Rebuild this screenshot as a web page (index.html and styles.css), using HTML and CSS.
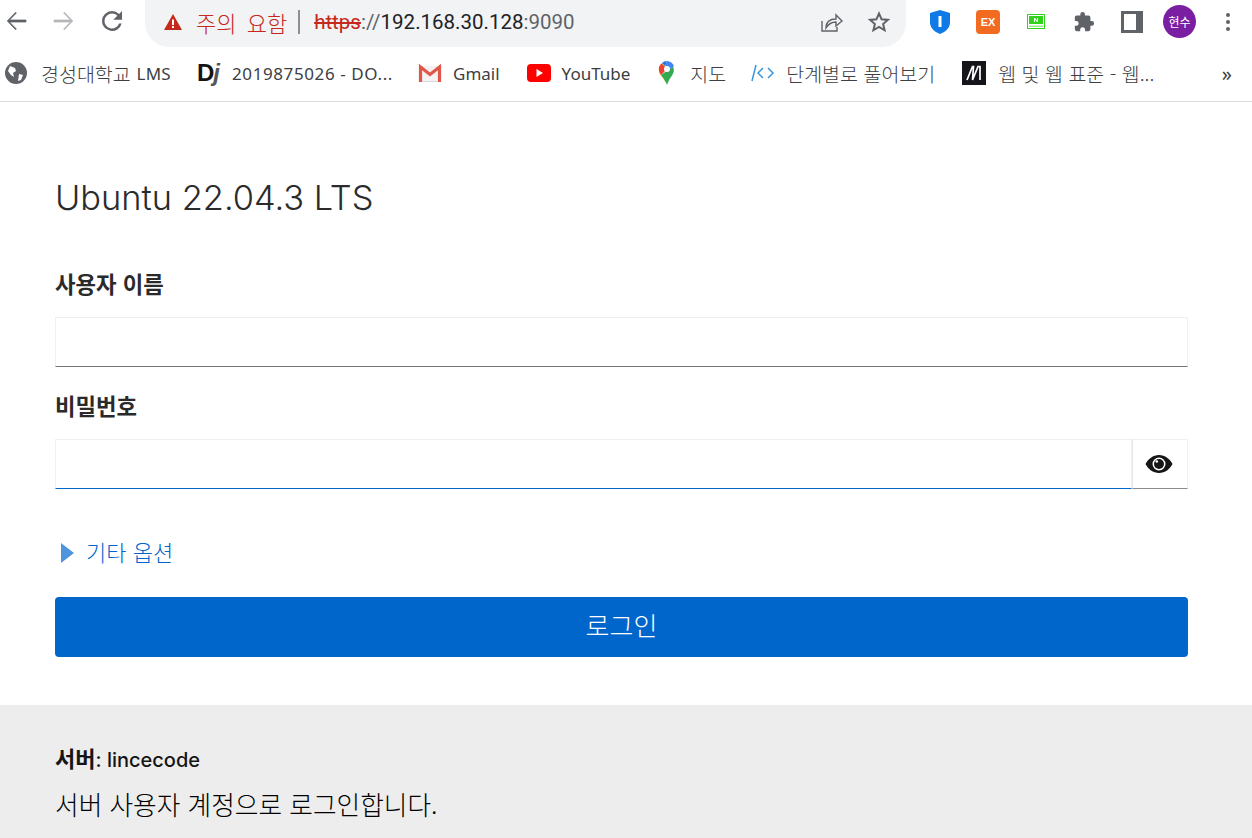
FILE: index.html
```html
<!DOCTYPE html>
<html lang="ko">
<head>
  <meta charset="utf-8">
  <title>Ubuntu 22.04.3 LTS</title>
  <link rel="stylesheet" href="styles.css">
</head>
<body>
<header class="chrome">
  <div class="toolbar">
    <svg class="nav nav-back" width="24" height="24" viewBox="2.4 2.4 19.2 19.2"><path d="M20 11.200H6.800l5.500-5.600L11.700 5 5 12l6.700 7 .6-.6-5.500-5.600H20z" fill="#5f6368" stroke="#5f6368" stroke-width=".6"/></svg>
    <svg class="nav nav-forward" width="24" height="24" viewBox="2.4 2.4 19.2 19.2"><path d="M4 11.200h13.200l-5.500-5.600.6-.6L19 12l-6.700 7-.6-.6 5.500-5.600H4z" fill="#b4b6b9" stroke="#b4b6b9" stroke-width=".6"/></svg>
    <svg class="nav nav-reload" width="24" height="24" viewBox="2.4 2.4 19.2 19.2"><path d="M17.650 6.350A7.960 7.960 0 0 0 12 4a8 8 0 1 0 7.730 10h-2.080A6 6 0 1 1 12 6c1.660 0 3.140.690 4.220 1.780L13 11h7V4z" fill="#5f6368"/></svg>
    <div class="omnibox">
      <svg class="warn" width="20" height="18" viewBox="0 0 20 18"><path d="M10 1l9 16H1z" fill="#c5281c"/><rect x="9" y="6.500" width="2" height="5.500" fill="#fff"/><rect x="9" y="13" width="2" height="2" fill="#fff"/></svg>
      <span class="warn-text">주의 요함</span>
      <span class="divider"></span>
      <span class="url"><s class="scheme">https</s><span class="dim">://</span>192.168.30.128<span class="dim">:9090</span></span>
      <span class="spacer"></span>
      <svg class="omni-icon" width="24" height="24" viewBox="0 0 24 24" fill="none" stroke="#5f6368" stroke-width="1.400"><path d="M3 11v10h15v-4"/><path d="M7 18c0-6 4-9 10-9V5l6 6-6 5v-4c-4 0-7 1-10 6z"/></svg>
      <svg class="omni-icon star" width="24" height="24" viewBox="0 0 24 24" fill="none" stroke="#5f6368" stroke-width="2"><path d="M12 3.500l2.600 5.800 6.300.6-4.800 4.200 1.500 6.200L12 17l-5.600 3.300 1.500-6.200L3.100 9.900l6.300-.6z"/></svg>
    </div>
    <div class="extensions">
      <svg width="20" height="24" viewBox="0 0 20 24"><path d="M10 0l10 3v9c0 6-4 9.500-10 12C4 21.500 0 18 0 12V3z" fill="#0f7ae5"/><rect x="8.500" y="6" width="3" height="11" fill="#fff"/></svg>
      <span class="ext-ex">EX</span>
      <svg width="18" height="15" viewBox="0 0 18 15"><rect x=".5" y=".5" width="17" height="14" fill="#fff" stroke="#2fd31b"/><rect x="2" y="2" width="14" height="8" fill="#2fd31b"/><rect x="2" y="11.500" width="14" height="1.500" fill="#9bea90"/><path d="M7 8V4h1l2 2.500V4h1v4h-1L8 5.500V8z" fill="#fff"/></svg>
      <svg width="22" height="22" viewBox="0 0 24 24"><path d="M20.500 11H19V7a2 2 0 0 0-2-2h-4V3.500a2.500 2.500 0 0 0-5 0V5H4a2 2 0 0 0-2 2v3.800h1.500a2.700 2.700 0 0 1 0 5.400H2V20a2 2 0 0 0 2 2h3.800v-1.500a2.700 2.700 0 0 1 5.400 0V22H17a2 2 0 0 0 2-2v-4h1.500a2.500 2.500 0 0 0 0-5z" fill="#5f6368"/></svg>
      <svg width="22" height="22" viewBox="0 0 22 22"><path d="M0 0h22v22H0z" fill="#5f6368"/><rect x="3" y="3" width="12" height="16" fill="#fff"/></svg>
      <span class="avatar">현수</span>
      <svg width="6" height="20" viewBox="0 0 6 20"><circle cx="3" cy="3" r="2" fill="#5f6368"/><circle cx="3" cy="10" r="2" fill="#5f6368"/><circle cx="3" cy="17" r="2" fill="#5f6368"/></svg>
    </div>
  </div>
  <nav class="bookmarks">
    <a class="bm bm-lms">
      <svg width="22" height="22" viewBox="0 0 22 22"><circle cx="11" cy="11" r="11" fill="#5f6368"/><path d="M5 4l5 2 1 3-3 2 1 4-3-2-3-4zM14 12l4 1-2 5-3 1z" fill="#fff"/></svg>
      <span class="ko">경성대학교</span>&nbsp;LMS</a>
    <a class="bm bm-dj"><span class="dj-logo">D<span class="dj-j">j</span></span><span class="dj-text">2019875026 - DO...</span></a>
    <a class="bm bm-gmail">
      <svg width="24" height="18" viewBox="0 0 24 18"><path d="M2 2h20v16H2z" fill="#f3f1f1"/><path d="M5 18h14" stroke="#d9d9d9" stroke-width="2"/><path d="M2.500 18V3l9.500 7.500L21.500 3v15" fill="none" stroke="#e0574a" stroke-width="3.200"/></svg>
      Gmail</a>
    <a class="bm bm-yt">
      <svg width="24" height="18" viewBox="0 0 24 18"><rect width="24" height="18" rx="4" fill="#f00"/><path d="M9.500 5l6.500 4-6.500 4z" fill="#fff"/></svg>
      YouTube</a>
    <a class="bm bm-maps">
      <svg width="18" height="24" viewBox="0 0 18 24"><path d="M9 24C7 19 1 15 1 8a8 8 0 0 1 3-6l5 5-6 7c2 3 4 6 6 10z" fill="#fbbc04"/><path d="M9 24c-1-3-3-6-6-10l12-8.500c1.500 3.500 1 6-1 9-2 3-4 6-5 9.500z" fill="#34a853"/><path d="M4 2a8 8 0 0 1 5-2l-2 5z" fill="#1a73e8"/><path d="M9 0a8 8 0 0 1 7 5l-4 3-5-3z" fill="#4285f4"/><path d="M3.500 2.500L9 8l-6 6c-3-4-3-8 .5-11.500z" fill="#ea4335"/><circle cx="9" cy="8" r="3" fill="#fff"/></svg>
      <span class="ko">지도</span></a>
    <a class="bm bm-step">
      <svg width="24" height="18" viewBox="0 0 24 18" fill="none" stroke="#3b95d9" stroke-width="1.500"><path d="M5 1L1 17M12 4L7 9l5 5M17 4l5 5-5 5"/></svg>
      <span class="ko">단계별로 풀어보기</span></a>
    <a class="bm bm-mdn">
      <svg width="24" height="24" viewBox="0 0 24 24"><rect width="24" height="24" fill="#15141a"/><path d="M5 19L10.500 5.500h1L10.500 19 16 5.500h2V19" fill="none" stroke="#fff" stroke-width="1.700"/></svg>
      <span class="ko">웹 및 웹 표준 - 웹...</span></a>
    <span class="more">»</span>
  </nav>
</header>

<main class="login">
  <h1 class="brand">Ubuntu 22.04.3 LTS</h1>
  <form class="login-form">
    <label class="field-label" for="user">사용자 이름</label>
    <input class="text-input input-user" id="user" type="text">
    <label class="field-label" for="pass">비밀번호</label>
    <div class="input-group">
      <input class="text-input input-pass" id="pass" type="password">
      <button class="eye-btn" type="button">
        <svg width="28" height="18" viewBox="0 0 28 18"><path d="M14 0c6 0 11 4 13.500 9C25 14 20 18 14 18S3 14 .5 9C3 4 8 0 14 0z" fill="#151515"/><circle cx="14" cy="9" r="6.500" fill="#fff"/><circle cx="14" cy="9" r="5" fill="#151515"/><circle cx="11.800" cy="6.500" r="1.300" fill="#fff"/></svg>
      </button>
    </div>
    <div class="other-options">
      <span class="caret"></span>
      <a class="other-link">기타 옵션</a>
    </div>
    <button class="login-btn" type="button">로그인</button>
  </form>
</main>

<footer class="server-info">
  <p class="server-name"><strong>서버</strong>: lincecode</p>
  <p class="server-note">서버 사용자 계정으로 로그인합니다.</p>
</footer>
</body>
</html>
```

FILE: styles.css
```css
html, body { margin: 0; padding: 0; }
body { width: 1252px; height: 838px; overflow: hidden; background: #fff; color: #151515; font-family: "Inter", "Noto Sans CJK KR", sans-serif; }

/* browser chrome */
.chrome { height: 102px; box-sizing: border-box; border-bottom: 1px solid #dadce0; }
.toolbar { height: 47px; display: flex; align-items: flex-start; }
.nav { flex: none; margin-top: 9px; }
.nav-back { margin-left: 4px; }
.nav-forward { margin-left: 24px; }
.nav-reload { margin-left: 24px; }
.omnibox { flex: none; width: 761px; height: 47px; margin-left: 21px; padding: 0 15px 3px 18px; box-sizing: border-box; background: #f1f3f4; border-radius: 0 0 24px 24px; display: flex; align-items: center; }
.warn { flex: none; }
.warn-text { margin-left: 13px; color: #c5281c; font: 300 22px "Noto Sans CJK KR", sans-serif; word-spacing: 4px; }
.divider { width: 2px; height: 24px; margin: 0 14px 0 11px; background: #8d9094; }
.url { font: 20.500px "Roboto", sans-serif; color: #202124; }
.scheme { color: #c5281c; }
.dim { color: #5f6368; }
.spacer { flex: 1; }
.omni-icon { flex: none; }
.star { margin-left: 24px; }
.extensions { display: flex; align-items: center; height: 43px; }
.extensions > * { flex: none; }
.extensions > :nth-child(1) { margin-left: 24px; }
.extensions > :nth-child(2) { margin-left: 26px; }
.extensions > :nth-child(3) { margin-left: 27px; }
.extensions > :nth-child(4) { margin-left: 28px; }
.extensions > :nth-child(5) { margin-left: 26px; }
.extensions > :nth-child(6) { margin-left: 20px; }
.extensions > :nth-child(7) { margin-left: 29px; }
.ext-ex { width: 24px; height: 24px; border-radius: 4px; background: #f26b21; color: #fff; font: bold 11px/24px "Liberation Sans", sans-serif; text-align: center; }
.avatar { width: 33px; height: 33px; border-radius: 50%; background: #7b1fa2; color: #fff; font: 12px/33px "Noto Sans CJK KR", sans-serif; text-align: center; }

.bookmarks { height: 54px; box-sizing: border-box; padding: 0 0 2px 5px; display: flex; align-items: center; font: 17px "Noto Sans", "Noto Sans CJK KR", sans-serif; color: #3c4043; }
.bm { display: flex; align-items: center; flex: none; white-space: nowrap; }
.bm svg { flex: none; }
.ko { font: 300 19.500px "Noto Sans CJK KR", sans-serif; }
.bm-lms { letter-spacing: .3px; }
.bm-lms svg { margin-right: 14px; }
.bm-lms .ko { margin-right: 1px; letter-spacing: 0; }
.bm-dj { margin-left: 26px; }
.dj-logo { width: 22px; margin-right: 13px; font: bold 24px/24px "Liberation Sans", sans-serif; color: #151515; }
.dj-j { color: #555; margin-left: -1px; font-style: italic; }
.dj-text { letter-spacing: .6px; }
.bm-gmail { margin-left: 25px; }
.bm-gmail svg { margin-right: 11px; }
.bm-yt { margin-left: 27px; }
.bm-yt svg { margin-right: 11px; }
.bm-maps { margin-left: 28px; }
.bm-maps svg { margin-right: 14px; }
.bm-step { margin-left: 25px; }
.bm-step svg { margin-right: 11px; }
.bm-mdn { margin-left: 27px; }
.bm-mdn svg { margin-right: 12px; }
.more { margin-left: auto; margin-right: 20px; font-size: 20px; }

/* login */
.login { padding: 0 64px 0 55px; height: 603px; box-sizing: border-box; }
.brand { margin: 0; padding-top: 75px; font: 300 34.400px/42px "Inter", sans-serif; color: #2b2b2b; }
.login-form { display: flex; flex-direction: column; }
.field-label { margin-top: 49px; font: bold 22.300px/30px "Noto Sans CJK KR", sans-serif; color: #2a2a2a; }
.field-label + .text-input { margin-top: 19px; }
.text-input { height: 50px; padding: 0 8px; box-sizing: border-box; border: 1px solid #f0f0f0; border-bottom-color: #72767b; outline: none; background: #fff; }
.input-user { width: 100%; }
.field-label[for="pass"] { margin-top: 23px; }
.input-group { display: flex; margin-top: 19px; }
.input-pass { flex: 1; border-bottom-color: #0066cc; }
.eye-btn { width: 56px; height: 50px; padding: 0 3px 0 0; border: 1px solid #f0f0f0; border-bottom-color: #8a8d90; border-left-color: #e6e6e6; background: #fff; display: flex; align-items: center; justify-content: center; }
.other-options { display: flex; align-items: center; margin-top: 46px; height: 32px; }
.caret { width: 0; height: 0; margin: 4px 0 0 6px; border-left: 13px solid #4f95de; border-top: 10px solid transparent; border-bottom: 10px solid transparent; }
.other-link { margin-left: 12px; color: #0066cc; font: 300 22px "Noto Sans CJK KR", sans-serif; }
.login-btn { height: 60px; margin-top: 30px; padding: 0 0 6px; border: 0; border-radius: 4px; background: #0066cc; color: #fff; font: 300 26px "Noto Sans CJK KR", sans-serif; }

/* footer */
.server-info { height: 133px; padding: 34px 55px 0; box-sizing: border-box; background: #ededed; }
.server-name { margin: 0; font: 500 20px/36px "Inter", "Noto Sans CJK KR", sans-serif; }
.server-name strong { font: bold 22px/36px "Noto Sans CJK KR", sans-serif; }
.server-note { margin: 8px 0 0; color: #000; font: 300 25.700px/36px "Noto Sans CJK KR", sans-serif; }
```
